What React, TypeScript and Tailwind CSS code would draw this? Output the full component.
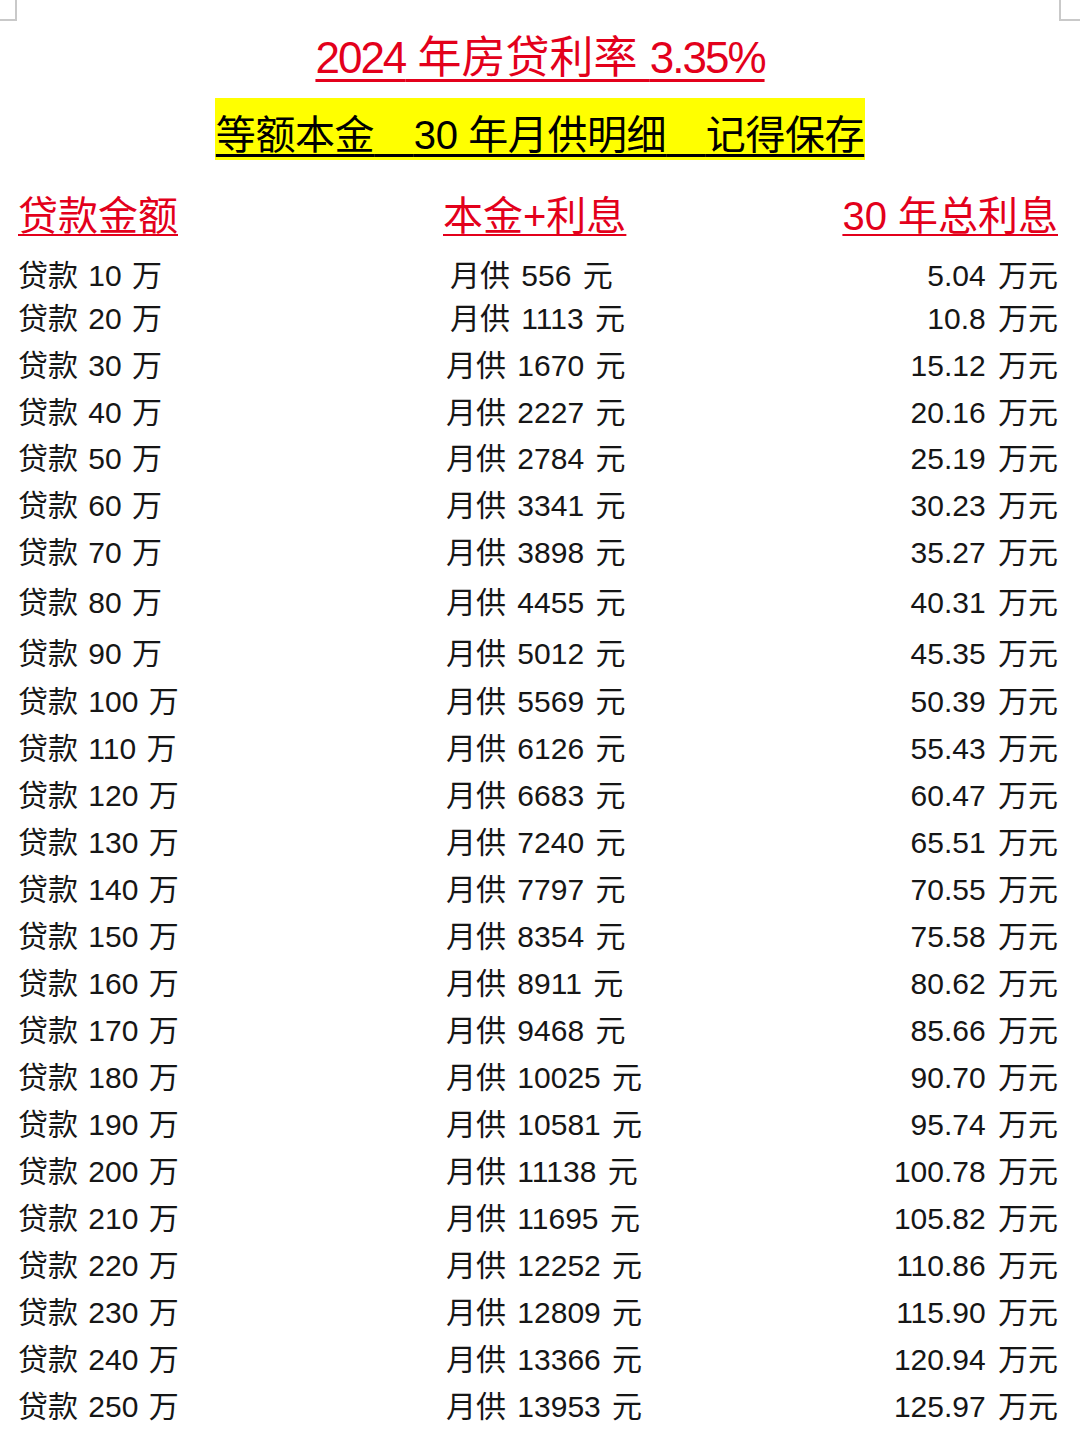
import React from 'react';

type Row = { loan: number; monthly: number; interest: string; shift: string; indent: string };

const monthly = [
    556, 1113, 1670, 2227, 2784, 3341, 3898, 4455, 5012, 5569, 6126, 6683, 7240,
    7797, 8354, 8911, 9468, 10025, 10581, 11138, 11695, 12252, 12809, 13366, 13953,
];

const interest = [
    '5.04', '10.8', '15.12', '20.16', '25.19', '30.23', '35.27', '40.31', '45.35',
    '50.39', '55.43', '60.47', '65.51', '70.55', '75.58', '80.62', '85.66', '90.70',
    '95.74', '100.78', '105.82', '110.86', '115.90', '120.94', '125.97',
];

// spacing in the source doc isn't perfectly even, nudge a few rows
const shifts: Record<number, string> = {
    1: 'mt-[-4px]',
    4: 'mt-[-1px]',
    7: 'mt-[3px]',
    8: 'mt-[4px]',
    9: 'mt-[1px]',
};

const rows: Row[] = monthly.map((m, i) => ({
    loan: (i + 1) * 10,
    monthly: m,
    interest: interest[i],
    shift: shifts[i] ?? 'mt-0',
    indent: i < 2 ? 'pl-[7px]' : 'pl-[3px]',
}));

function CornerMarks() {
    return (
        <div className="pointer-events-none absolute inset-0" aria-hidden>
            <div className="absolute left-[15px] top-0 h-[20px] w-[2px] bg-[#c9c9c9]" />
            <div className="absolute left-0 top-[19px] h-[2px] w-[17px] bg-[#c9c9c9]" />
            <div className="absolute left-[1059px] top-0 h-[21px] w-[2px] bg-[#c9c9c9]" />
            <div className="absolute left-[1059px] top-[19px] h-[2px] w-[21px] bg-[#c9c9c9]" />
        </div>
    );
}

export default function App() {
    return (
        <div className="relative min-h-[1439px] w-full overflow-hidden bg-white font-['Liberation_Sans','Noto_Sans_CJK_SC',sans-serif] text-[#161616]">
            <CornerMarks />

            {/* 标题 */}
            <div className="flex justify-center pt-[33px]">
                <h1 className="text-[44px] leading-[50px] font-normal text-[#e3001b] underline decoration-[3px] underline-offset-[6px]">
                    <span className="tracking-[-2px]">2024</span> 年房贷利率 <span className="tracking-[-2px]">3.35%</span>
                </h1>
            </div>

            <div className="mt-[15px] flex justify-center">
                <div className="inline-block bg-[#ffff00] px-[1px] pt-[15px] pb-[3px] text-[40px] leading-[44px] tracking-[-0.4px] text-black underline decoration-[3px] underline-offset-[5px]">
                    等额本金{'\u3000'}30 年月供明细{'\u3000'}记得保存
                </div>
            </div>

            {/* 表头 */}
            <div className="mt-[32px] flex pl-[18px] pr-[22px] text-[40px] leading-[48px] text-[#e3001b]">
                <div className="w-[425px]">
                    <span className="underline decoration-2 underline-offset-[4px]">贷款金额</span>
                </div>
                <div className="flex-1">
                    <span className="underline decoration-2 underline-offset-[4px]">本金+利息</span>
                </div>
                <div className="text-right">
                    <span className="underline decoration-2 underline-offset-[4px]">30 年总利息</span>
                </div>
            </div>

            {/* 明细 */}
            <div className="mt-[12px] flex flex-col pl-[18px] pr-[22px] text-[30px]">
                {rows.map((r) => (
                    <div key={r.loan} className={`flex h-[47px] leading-[47px] ${r.shift}`}>
                        <div className="w-[425px] whitespace-nowrap [word-spacing:2px]">贷款 {r.loan} 万</div>
                        <div className={`flex-1 whitespace-nowrap [word-spacing:3px] ${r.indent}`}>月供 {r.monthly} 元</div>
                        <div className="whitespace-nowrap text-right [word-spacing:4px]">{r.interest} 万元</div>
                    </div>
                ))}
            </div>
        </div>
    );
}
